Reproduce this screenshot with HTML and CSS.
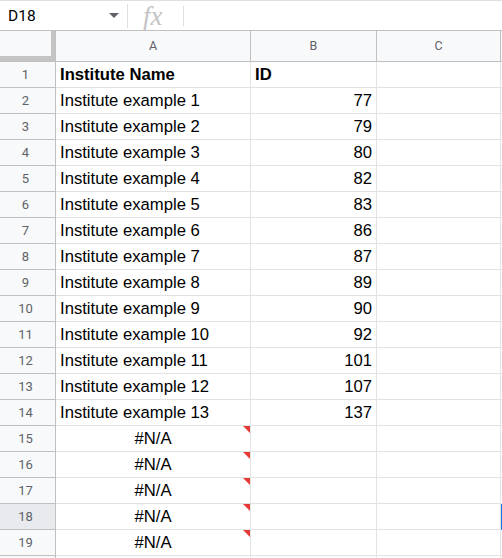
FILE: index.html
```html
<!DOCTYPE html>
<html>
<head>
<meta charset="utf-8">
<link rel="stylesheet" href="styles.css">
</head>
<body>
<div class="sheet">
  <div class="topbar">
    <div class="namebox"><span class="ref">D18</span><span class="caret"></span></div>
    <div class="sep"></div>
    <div class="fx">fx</div>
    <div class="sep short"></div>
  </div>
  <div class="grid">
    <div class="row head">
      <div class="rh corner"></div>
      <div class="c a">A</div>
      <div class="c b">B</div>
      <div class="c cc">C</div>
      <div class="c d"></div>
    </div>
    <div class="row"><div class="rh">1</div><div class="c a bold">Institute Name</div><div class="c b bold">ID</div><div class="c cc"></div><div class="c d"></div></div>
    <div class="row"><div class="rh">2</div><div class="c a">Institute example 1</div><div class="c b num">77</div><div class="c cc"></div><div class="c d"></div></div>
    <div class="row"><div class="rh">3</div><div class="c a">Institute example 2</div><div class="c b num">79</div><div class="c cc"></div><div class="c d"></div></div>
    <div class="row"><div class="rh">4</div><div class="c a">Institute example 3</div><div class="c b num">80</div><div class="c cc"></div><div class="c d"></div></div>
    <div class="row"><div class="rh">5</div><div class="c a">Institute example 4</div><div class="c b num">82</div><div class="c cc"></div><div class="c d"></div></div>
    <div class="row"><div class="rh">6</div><div class="c a">Institute example 5</div><div class="c b num">83</div><div class="c cc"></div><div class="c d"></div></div>
    <div class="row"><div class="rh">7</div><div class="c a">Institute example 6</div><div class="c b num">86</div><div class="c cc"></div><div class="c d"></div></div>
    <div class="row"><div class="rh">8</div><div class="c a">Institute example 7</div><div class="c b num">87</div><div class="c cc"></div><div class="c d"></div></div>
    <div class="row"><div class="rh">9</div><div class="c a">Institute example 8</div><div class="c b num">89</div><div class="c cc"></div><div class="c d"></div></div>
    <div class="row"><div class="rh">10</div><div class="c a">Institute example 9</div><div class="c b num">90</div><div class="c cc"></div><div class="c d"></div></div>
    <div class="row"><div class="rh">11</div><div class="c a">Institute example 10</div><div class="c b num">92</div><div class="c cc"></div><div class="c d"></div></div>
    <div class="row"><div class="rh">12</div><div class="c a">Institute example 11</div><div class="c b num">101</div><div class="c cc"></div><div class="c d"></div></div>
    <div class="row"><div class="rh">13</div><div class="c a">Institute example 12</div><div class="c b num">107</div><div class="c cc"></div><div class="c d"></div></div>
    <div class="row"><div class="rh">14</div><div class="c a">Institute example 13</div><div class="c b num">137</div><div class="c cc"></div><div class="c d"></div></div>
    <div class="row"><div class="rh">15</div><div class="c a err">#N/A</div><div class="c b"></div><div class="c cc"></div><div class="c d"></div></div>
    <div class="row"><div class="rh">16</div><div class="c a err">#N/A</div><div class="c b"></div><div class="c cc"></div><div class="c d"></div></div>
    <div class="row"><div class="rh">17</div><div class="c a err">#N/A</div><div class="c b"></div><div class="c cc"></div><div class="c d"></div></div>
    <div class="row sel"><div class="rh">18</div><div class="c a err">#N/A</div><div class="c b"></div><div class="c cc"></div><div class="c d active"></div></div>
    <div class="row"><div class="rh">19</div><div class="c a err">#N/A</div><div class="c b"></div><div class="c cc"></div><div class="c d"></div></div>
    <div class="row"><div class="rh"></div><div class="c a"></div><div class="c b"></div><div class="c cc"></div><div class="c d"></div></div>
  </div>
</div>
</body>
</html>
```

FILE: styles.css
```css
html, body {
  margin: 0;
  padding: 0;
  background: #fff;
}
.sheet {
  width: 502px;
  height: 558px;
  overflow: hidden;
  font-family: "Liberation Sans", Arial, sans-serif;
}
.topbar {
  display: flex;
  align-items: center;
  height: 30px;
  box-sizing: border-box;
  border-top: 1px solid #e0e0e0;
}
.namebox {
  width: 127px;
  box-sizing: border-box;
  padding: 0 8px 0 8px;
  display: flex;
  align-items: center;
  justify-content: space-between;
}
.ref {
  font-family: Roboto, "Liberation Sans", sans-serif;
  font-size: 15.5px;
  color: #000;
}
.caret {
  width: 0;
  height: 0;
  border-left: 5px solid transparent;
  border-right: 5px solid transparent;
  border-top: 5px solid #5f6368;
}
.sep {
  width: 1px;
  height: 24px;
  background: #e0e0e0;
}
.sep.short {
  height: 20px;
}
.fx {
  width: 55px;
  box-sizing: border-box;
  padding-left: 15px;
  font-family: "Liberation Serif", serif;
  font-style: italic;
  font-size: 27px;
  color: #c4c4c4;
  line-height: 28px;
}
.grid {
  display: flex;
  flex-direction: column;
}
.row {
  display: flex;
  height: 26px;
}
.row.head {
  height: 31px;
  border-top: 1px solid #c0c0c0;
}
.rh {
  flex: none;
  width: 56px;
  box-sizing: border-box;
  padding-right: 4px;
  background: #f8f9fa;
  border-right: 1px solid #c0c0c0;
  border-bottom: 1px solid #c0c0c0;
  text-align: center;
  font-family: Roboto, "Liberation Sans", sans-serif;
  font-size: 13px;
  line-height: 25px;
  color: #5f6368;
}
.row.sel .rh {
  background: #e8eaed;
}
.rh.corner {
  box-shadow: inset -4px -5px 0 #c4c4c4;
}
.c {
  flex: none;
  position: relative;
  box-sizing: border-box;
  border-right: 1px solid #e2e3e3;
  border-bottom: 1px solid #e2e3e3;
  padding: 0 4px;
  font-size: 16.67px;
  line-height: 25px;
  color: #000;
  white-space: nowrap;
  overflow: hidden;
}
.a { width: 195px; }
.b { width: 126px; }
.cc { width: 124px; }
.d { flex: 1; border-right: none; }
.head .c {
  background: #f8f9fa;
  border-right-color: #c0c0c0;
  border-bottom-color: #c0c0c0;
  text-align: center;
  font-family: Roboto, "Liberation Sans", sans-serif;
  font-size: 12.5px;
  line-height: 29px;
  color: #5f6368;
}
.bold { font-weight: bold; }
.num { text-align: right; }
.err { text-align: center; }
.err::after {
  content: "";
  position: absolute;
  top: 0;
  right: 0;
  width: 0;
  height: 0;
  border-top: 7px solid #e53935;
  border-left: 7px solid transparent;
}
.d.active {
  border-left: 2px solid #1a73e8;
}
```
